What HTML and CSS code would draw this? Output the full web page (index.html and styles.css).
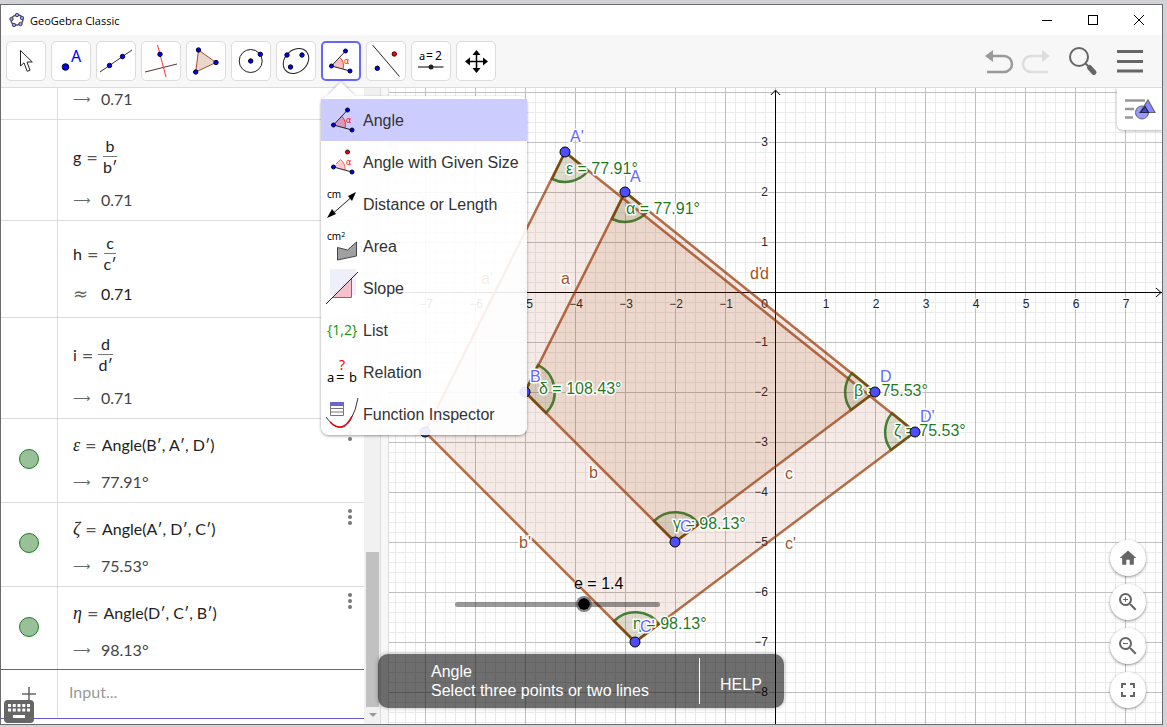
FILE: index.html
```
<!DOCTYPE html>
<html lang="en">
<head>
  <meta charset="UTF-8" />
  <meta name="viewport" content="width=device-width, initial-scale=1.0"/>
  <title>GeoGebra Classic</title>
  <link rel="stylesheet" href="styles.css">
</head>
<body>
  <svg class="defs" width="0" height="0" aria-hidden="true">
    <symbol id="icon-angle" viewBox="0 0 32 32">
      <path d="M6.500 21 L15 12.500 A12 12 0 0 1 18 24z" fill="#f00" fill-opacity=".25"/>
      <path d="M15 12.500 A12 12 0 0 1 18 24" fill="none" stroke="#e33"/>
      <path d="M20.500 6 L6.500 21 L25 26" fill="none" stroke="#222"/>
      <g fill="#00f" stroke="#002"><circle cx="20.500" cy="6" r="2"/><circle cx="6.500" cy="21" r="2"/><circle cx="25" cy="26" r="2"/></g>
      <text x="19" y="19" font-family="DejaVu Sans" font-size="8" fill="#f00">α</text>
    </symbol>
  </svg>

  <div class="window">
    <header class="titlebar">
      <svg width="16" height="16" viewBox="0 0 16 16">
        <ellipse cx="8" cy="8" rx="6" ry="5" fill="none" stroke="#555" stroke-width="1.500" transform="rotate(-15 8 8)"/>
        <g fill="#99f" stroke="#446"><circle cx="8" cy="3" r="1.700"/><circle cx="13" cy="6" r="1.700"/><circle cx="11.500" cy="12" r="1.700"/><circle cx="5" cy="13" r="1.700"/><circle cx="2.500" cy="7" r="1.700"/></g>
      </svg>
      <span class="title">GeoGebra Classic</span>
      <button class="win-btn" aria-label="Minimize"><svg width="10" height="10"><path d="M0 5.500H10" stroke="#000"/></svg></button>
      <button class="win-btn" aria-label="Maximize"><svg width="10" height="10"><rect x=".5" y=".5" width="9" height="9" fill="none" stroke="#000"/></svg></button>
      <button class="win-btn" aria-label="Close"><svg width="10" height="10"><path d="M0 0L10 10M10 0L0 10" stroke="#000"/></svg></button>
    </header>

    <nav class="toolbar">
      <div class="tools">
        <button class="tool" aria-label="Move"><svg viewBox="0 0 32 32"><path d="M10.500 5.500V21L14 17.800L17.200 26.300L20 25.200L17 17H22.300z" fill="#fff" stroke="#222"/></svg></button>
        <button class="tool" aria-label="Point"><svg viewBox="0 0 32 32"><circle cx="10.500" cy="22" r="3.300" fill="#00f" stroke="#002"/><text x="16" y="17" font-family="Noto Sans" font-size="16" fill="#00f">A</text></svg></button>
        <button class="tool" aria-label="Line"><svg viewBox="0 0 32 32"><path d="M0 27L32 5" stroke="#333"/><g fill="#00f" stroke="#002"><circle cx="9.500" cy="20.500" r="2.200"/><circle cx="22.500" cy="11.500" r="2.200"/></g></svg></button>
        <button class="tool" aria-label="Perpendicular line"><svg viewBox="0 0 32 32"><path d="M0 27L32 19" stroke="#533"/><path d="M12.500 0L21 32" stroke="#f33"/><circle cx="15" cy="9.300" r="2.200" fill="#00f" stroke="#002"/></svg></button>
        <button class="tool" aria-label="Polygon"><svg viewBox="0 0 32 32"><path d="M8.500 5L26 17.500L5.700 27z" fill="#ebd6cc" stroke="#a54f2a"/><g fill="#00f" stroke="#002"><circle cx="8.500" cy="5" r="2.200"/><circle cx="26" cy="17.500" r="2.200"/><circle cx="5.700" cy="27" r="2.200"/></g></svg></button>
        <button class="tool" aria-label="Circle"><svg viewBox="0 0 32 32"><circle cx="15.700" cy="16" r="11.500" fill="none" stroke="#222"/><g fill="#00f" stroke="#002"><circle cx="15.700" cy="16" r="2.200"/><circle cx="25.300" cy="9.300" r="2.200"/></g></svg></button>
        <button class="tool" aria-label="Ellipse"><svg viewBox="0 0 32 32"><ellipse cx="16" cy="16" rx="14" ry="11" transform="rotate(-42 16 16)" fill="none" stroke="#222"/><g fill="#00f" stroke="#002"><circle cx="7" cy="10" r="2.200"/><circle cx="22" cy="10" r="2.200"/><circle cx="10.500" cy="22" r="2.200"/></g></svg></button>
        <div class="tool-open">
          <button class="tool active" aria-label="Angle" aria-expanded="true"><svg><use href="#icon-angle"/></svg></button>
          <div class="menu" role="menu">
            <button class="menu-item selected" role="menuitem"><svg><use href="#icon-angle"/></svg>Angle</button>
            <button class="menu-item" role="menuitem">
              <svg viewBox="0 0 32 32"><path d="M6.500 21L13 13.500L15 14A12 12 0 0 1 18 24z" fill="#fcc"/><path d="M9 18L13.500 13.500A12 12 0 0 1 18 24" fill="none" stroke="#f66"/><path d="M6.500 21L25 26" stroke="#222"/><circle cx="20.500" cy="6" r="2" fill="#f00" stroke="#300"/><g fill="#00f" stroke="#002"><circle cx="6.500" cy="21" r="2"/><circle cx="25" cy="26" r="2"/></g><text x="19" y="19" font-family="DejaVu Sans" font-size="8" fill="#f00">α</text></svg>
              Angle with Given Size
            </button>
            <button class="menu-item" role="menuitem">
              <svg viewBox="0 0 32 32"><text x="0" y="10" font-family="Noto Sans" font-size="10">cm</text><path d="M3 28L27 7" stroke="#222"/><path d="M0 30L5 21L9 26zM29 4L21 8L25 13z"/></svg>
              Distance or Length
            </button>
            <button class="menu-item" role="menuitem">
              <svg viewBox="0 0 32 32"><text x="0" y="10" font-family="Noto Sans" font-size="10">cm<tspan font-size="7" dy="-3">2</tspan></text><path d="M10.500 17.500L20.500 20L29.500 12V26L10.500 30z" fill="#a0a0a0" stroke="#444"/></svg>
              Area
            </button>
            <button class="menu-item" role="menuitem">
              <svg viewBox="0 0 32 32"><path d="M3-3H29V23H3z" fill="#efeffc"/><path d="M6 25.500H24.500V7z" fill="#f5c0cc"/><path d="M6 25.500H24.500V7" fill="none" stroke="#f33"/><path d="M-1 32L31 0" stroke="#222"/></svg>
              Slope
            </button>
            <button class="menu-item" role="menuitem">
              <svg viewBox="0 0 32 32"><text x="0" y="21" font-family="Open Sans" font-size="14" font-weight="500" fill="#0a9a0a">{1,2}</text></svg>
              List
            </button>
            <button class="menu-item" role="menuitem">
              <svg viewBox="0 0 32 32"><text x="12" y="14" font-family="Noto Sans" font-size="14" fill="#f00">?</text><text x="0" y="26" font-family="Noto Sans" font-size="13">a</text><text x="9" y="26" font-family="Noto Sans" font-size="15">=</text><text x="22" y="26" font-family="Noto Sans" font-size="13">b</text></svg>
              Relation
            </button>
            <button class="menu-item" role="menuitem">
              <svg viewBox="0 0 32 32"><path d="M-1 19C8 31 17 34 24 21Q29 12 31 0" fill="none" stroke="#333"/><path d="M3 24C10 31 18 32 25 18" fill="none" stroke="#e00" stroke-width="1.300"/><path d="M3.500 4.500H16.500V17.500H3.500zM3.500 10.500H16.500M3.500 14H16.500" fill="#fff" stroke="#777"/><path d="M3 4H17V8H3z" fill="#66c"/></svg>
              Function Inspector
            </button>
          </div>
        </div>
        <button class="tool" aria-label="Reflect"><svg viewBox="0 0 32 32"><path d="M2.500 0L29.500 31.500" stroke="#222"/><circle cx="24.300" cy="9" r="2.200" fill="#f00" stroke="#300"/><circle cx="7.300" cy="23.300" r="2.200" fill="#00f" stroke="#002"/></svg></button>
        <button class="tool" aria-label="Slider"><svg viewBox="0 0 32 32"><text x="4" y="15" font-family="Noto Sans" font-size="11">a</text><text x="11" y="15" font-family="Noto Sans" font-size="12">=</text><text x="20" y="15" font-family="Noto Sans" font-size="12">2</text><path d="M3 22H28.500" stroke="#555" stroke-width="1.500"/><circle cx="16" cy="22" r="2.500" fill="#222"/></svg></button>
        <button class="tool" aria-label="Move view"><svg viewBox="0 0 32 32"><path d="M16.500 9V24M9 16.500H24" stroke="#000" stroke-width="1.500"/><path d="M16.500 5L20.500 10H12.500zM16.500 28L20.500 23H12.500zM5 16.500L10 12.500V20.500zM28 16.500L23 12.500V20.500z"/></svg></button>
      </div>
      <div class="actions">
        <div class="history">
          <button class="action" aria-label="Undo"><svg viewBox="0 0 32 32"><path d="M9 11H21A8 8 0 0 1 21 27H4" fill="none" stroke="#999" stroke-width="2.500"/><path d="M2 11L10 5V17z" fill="#999"/></svg></button>
          <button class="action" aria-label="Redo"><svg viewBox="0 0 32 32"><path d="M23 11H11A8 8 0 0 0 11 27H28" fill="none" stroke="#ddd" stroke-width="2.500"/><path d="M30 11L22 5V17z" fill="#ddd"/></svg></button>
        </div>
        <button class="action" aria-label="Search"><svg viewBox="0 0 32 32"><circle cx="12" cy="12" r="9" fill="none" stroke="#666" stroke-width="2"/><path d="M18.500 18.500L21 21" stroke="#666" stroke-width="2"/><path d="M22.500 22.500L27 27.500" stroke="#666" stroke-width="5" stroke-linecap="round"/></svg></button>
        <button class="action" aria-label="Menu"><svg viewBox="0 0 32 32"><path d="M3 6.500H29M3 16.500H29M3 26H29" stroke="#666" stroke-width="3"/></svg></button>
      </div>
    </nav>

    <main class="main">
      <section class="algebra">
        <div class="rows">
          <div class="row row-cut">
            <div class="marker"></div>
            <div class="formula"><div class="result"><span class="sign">⟶</span>0.71</div></div>
          </div>
          <div class="row">
            <div class="marker"></div>
            <div class="formula">
              <div class="equation">g<span class="equals">=</span><span class="fraction"><span>b</span><span>b′</span></span></div>
              <div class="result"><span class="sign">⟶</span>0.71</div>
            </div>
          </div>
          <div class="row row-low">
            <div class="marker"></div>
            <div class="formula">
              <div class="equation">h<span class="equals">=</span><span class="fraction"><span>c</span><span>c′</span></span></div>
              <div class="result approx"><span class="sign">≈</span>0.71</div>
            </div>
          </div>
          <div class="row">
            <div class="marker"></div>
            <div class="formula">
              <div class="equation">i<span class="equals">=</span><span class="fraction"><span>d</span><span>d′</span></span></div>
              <div class="result"><span class="sign">⟶</span>0.71</div>
            </div>
          </div>
          <div class="row row-angle">
            <div class="marker"><button class="visibility" aria-label="Show or hide ε"></button></div>
            <div class="formula">
              <div class="equation"><i>ε</i><span class="equals">=</span><span>Angle(B′, A′, D′)</span></div>
              <div class="result"><span class="sign">⟶</span>77.91°</div>
            </div>
            <button class="more" aria-label="More"><i></i><i></i><i></i></button>
          </div>
          <div class="row row-angle">
            <div class="marker"><button class="visibility" aria-label="Show or hide ζ"></button></div>
            <div class="formula">
              <div class="equation"><i>ζ</i><span class="equals">=</span><span>Angle(A′, D′, C′)</span></div>
              <div class="result"><span class="sign">⟶</span>75.53°</div>
            </div>
            <button class="more" aria-label="More"><i></i><i></i><i></i></button>
          </div>
          <div class="row row-angle row-last">
            <div class="marker"><button class="visibility" aria-label="Show or hide η"></button></div>
            <div class="formula">
              <div class="equation"><i>η</i><span class="equals">=</span><span>Angle(D′, C′, B′)</span></div>
              <div class="result"><span class="sign">⟶</span>98.13°</div>
            </div>
            <button class="more" aria-label="More"><i></i><i></i><i></i></button>
          </div>
          <div class="row input-row">
            <div class="marker"><svg width="14" height="14"><path d="M7 0V14M0 7H14" stroke="#666" stroke-width="1.500"/></svg></div>
            <input type="text" class="input" placeholder="Input..." aria-label="Input">
          </div>
        </div>
        <div class="scrollbar">
          <div class="thumb"></div>
          <svg width="16" height="17"><path d="M5 6H13L9 10z" fill="#999"/></svg>
        </div>
      </section>
      <div class="splitter"></div>

      <section class="graphics">
        <svg class="plot" width="100%" height="100%">
          <defs>
            <pattern id="minor" x="386" y="204" width="10" height="10" patternUnits="userSpaceOnUse"><path d="M0 0H10V1H1V10H0z" fill="#ebebeb"/></pattern>
            <pattern id="major" x="386" y="204" width="50" height="50" patternUnits="userSpaceOnUse"><path d="M0 0H50V1H1V50H0z" fill="#c0c0c0"/></pattern>
          </defs>
          <rect width="100%" height="100%" fill="url(#minor)"/>
          <rect width="100%" height="100%" fill="url(#major)"/>

          <!-- axes -->
          <rect x="0" y="204" width="100%" height="1"/>
          <rect x="386" y="3" width="1" height="100%"/>
          <path d="M382 7L386.500 2L391 7" fill="none" stroke="#000"/>
          <svg x="100%" y="204" overflow="visible"><path d="M-6-4L-1 .5L-6 5" fill="none" stroke="#000"/></svg>

          <!-- everything below is in pixels from the origin, 50 per unit -->
          <g transform="translate(386 204)">
            <g class="ticks" text-anchor="middle">
              <text x="-349" y="16">−7</text><text x="-299" y="16">−6</text><text x="-249" y="16">−5</text><text x="-199" y="16">−4</text>
              <text x="-149" y="16">−3</text><text x="-99" y="16">−2</text><text x="-49" y="16">−1</text>
              <text x="51" y="16">1</text><text x="101" y="16">2</text><text x="151" y="16">3</text><text x="201" y="16">4</text>
              <text x="251" y="16">5</text><text x="301" y="16">6</text><text x="351" y="16">7</text>
            </g>
            <g class="ticks" text-anchor="end">
              <text x="-7" y="16">0</text>
              <text x="-7" y="-146">3</text><text x="-7" y="-96">2</text><text x="-7" y="-46">1</text>
              <text x="-7" y="54">−1</text><text x="-7" y="104">−2</text><text x="-7" y="154">−3</text><text x="-7" y="204">−4</text>
              <text x="-7" y="254">−5</text><text x="-7" y="304">−6</text><text x="-7" y="354">−7</text><text x="-7" y="404">−8</text>
            </g>

            <g class="angle">
              <path d="M-150-100l-13 27A30 30 0 0 0 -127-81z"/>
              <path d="M-210-140l-13 27A30 30 0 0 0 -187-121z"/>
              <path d="M-250 100l13-27A30 30 0 0 1 -229 121z"/>
              <path d="M-100 250l-21-21A30 30 0 0 1 -76 232z"/>
              <path d="M-140 350l-21-21A30 30 0 0 1 -116 332z"/>
              <path d="M100 100l-23-19A30 30 0 0 0 76 118z"/>
              <path d="M140 140l-23-19A30 30 0 0 0 116 158z"/>
            </g>
            <g class="shape">
              <path d="M-150-100L-250 100L-100 250L100 100z"/>
              <path d="M-210-140L-350 140L-140 350L140 140z"/>
            </g>
            <g class="label segment-label">
              <text x="-214" y="-8">a</text><text x="-294" y="-8">a'</text>
              <text x="-186" y="186">b</text><text x="-256" y="256">b'</text>
              <text x="10" y="187">c</text><text x="10" y="257">c'</text>
              <text x="-25" y="-13">d'</text><text x="-15" y="-13">d</text>
            </g>
            <g class="label angle-label">
              <text x="-209" y="-118">ε = 77.91°</text><text x="-149" y="-78">α = 77.91°</text>
              <text x="-236" y="102">δ = 108.43°</text><text x="-102" y="237">γ = 98.13°</text>
              <text x="-142" y="337">η = 98.13°</text><text x="79" y="104">β = 75.53°</text>
              <text x="119" y="144">ζ = 75.53°</text>
            </g>
            <g class="point">
              <circle cx="-150" cy="-100" r="5"/><circle cx="-250" cy="100" r="5"/><circle cx="-100" cy="250" r="5"/><circle cx="100" cy="100" r="5"/>
              <circle cx="-210" cy="-140" r="5"/><circle cx="-350" cy="140" r="5"/><circle cx="-140" cy="350" r="5"/><circle cx="140" cy="140" r="5"/>
            </g>
            <g class="label point-label">
              <text x="-145" y="-110">A</text><text x="-245" y="90">B</text><text x="-95" y="240">C</text><text x="105" y="90">D</text>
              <text x="-205" y="-150">A'</text><text x="-345" y="130">B'</text><text x="-135" y="340">C'</text><text x="145" y="130">D'</text>
            </g>
          </g>
        </svg>

        <div class="slider">
          <label for="sliderE">e = 1.4</label>
          <input type="range" id="sliderE" min="-5" max="5" step="0.1" value="1.4">
        </div>

        <button class="style-btn" aria-label="Style bar">
          <svg width="32" height="32" viewBox="0 0 32 32"><path d="M1 7.500H21M1 16H10M1 24.500H9" stroke="#999" stroke-width="2.500"/><circle cx="18" cy="19.500" r="6.500" fill="#99f" stroke="#666"/><path d="M24 7L31 19.500H16z" fill="#88f" stroke="#666" stroke-width="1.200"/><path d="M21 13.500L24.500 19.500H16.500z" fill="#44d" stroke="#224" stroke-width="1.200"/></svg>
        </button>

        <div class="zoom-btns">
          <button class="home" aria-label="Home"><svg viewBox="0 0 24 24"><path d="M10 20v-6h4v6h5v-8h3L12 3 2 12h3v8z"/></svg></button>
          <button aria-label="Zoom in"><svg viewBox="0 0 24 24"><path d="M15.500 14h-.79l-.28-.27A6.471 6.471 0 0 0 16 9.500 6.500 6.500 0 1 0 9.500 16c1.610 0 3.090-.59 4.230-1.570l.27.28v.79l5 4.990L20.490 19l-4.990-5zm-6 0C7.010 14 5 11.990 5 9.500S7.010 5 9.500 5 14 7.010 14 9.500 11.990 14 9.500 14zM12 10h-2v2H9v-2H7V9h2V7h1v2h2z"/></svg></button>
          <button aria-label="Zoom out"><svg viewBox="0 0 24 24"><path d="M15.500 14h-.79l-.28-.27A6.471 6.471 0 0 0 16 9.500 6.500 6.500 0 1 0 9.500 16c1.610 0 3.090-.59 4.230-1.570l.27.28v.79l5 4.990L20.490 19l-4.990-5zm-6 0C7.010 14 5 11.990 5 9.500S7.010 5 9.500 5 14 7.010 14 9.500 11.990 14 9.500 14zM7 9h5v1H7z"/></svg></button>
          <button aria-label="Full screen"><svg viewBox="0 0 24 24"><path d="M7 14H5v5h5v-2H7v-3zm-2-4h2V7h3V5H5v5zm12 7h-3v2h5v-5h-2v3zM14 5v2h3v3h2V5h-5z"/></svg></button>
        </div>
      </section>

      <div class="message">
        <div class="message-text">
          <p>Angle</p>
          <p>Select three points or two lines</p>
        </div>
        <button class="help">HELP</button>
      </div>

      <button class="keyboard" aria-label="Keyboard">
        <svg width="22" height="15"><path d="M0 1.500H22M0 6H22" stroke="#fff" stroke-width="3" stroke-dasharray="3 1.750"/><path d="M5 12.500H17" stroke="#fff" stroke-width="3"/></svg>
      </button>
    </main>
  </div>
</body>
</html>
```

FILE: styles.css
```
:root {
  --border: #dcdcdc;
  --bar-bg: #f7f7f7;
  --icon: #666;
  --accent: #6557d2;
  --segment: #993300;
  --angle: #006400;
  --point: #4d4dff;
}

* {
  margin: 0;
  padding: 0;
  box-sizing: border-box;
}

body {
  height: 100vh;
  padding: 4px 4px 2px 0;
  background: #d2d3d6;
  font-family: "Liberation Sans", Arial, sans-serif;
  overflow: hidden;
}

button {
  background: none;
  border: none;
  font: inherit;
  color: inherit;
  cursor: pointer;
}

svg {
  display: block;
}

.defs {
  position: absolute;
}

.window {
  height: 100%;
  display: flex;
  flex-direction: column;
  background: #fff;
  border: 1px solid #6b6b6f;
}

/* title bar */
.titlebar {
  display: flex;
  align-items: center;
  height: 30px;
  padding-left: 8px;
}

.title {
  flex: 1;
  padding-left: 5px;
  font-family: "Open Sans", sans-serif;
  font-size: 11px;
}

.win-btn {
  display: flex;
  align-items: center;
  justify-content: center;
  width: 46px;
  height: 30px;
}

/* toolbar */
.toolbar {
  display: flex;
  justify-content: space-between;
  align-items: center;
  padding: 6px 16px 6px 5px;
  background: var(--bar-bg);
  border-bottom: 1px solid var(--border);
}

.tools {
  display: flex;
  gap: 5px;
}

.tool {
  display: flex;
  align-items: center;
  justify-content: center;
  width: 40px;
  height: 40px;
  background: #fff;
  border: 1px solid var(--border);
  border-radius: 5px;
}

.tool svg,
.action svg,
.menu-item svg {
  width: 32px;
  height: 32px;
  overflow: visible;
}

.tool.active {
  border: 2px solid #6666ff;
}

.tool-open {
  position: relative;
}

.actions {
  display: flex;
  gap: 15px;
}

.history {
  display: flex;
  gap: 5px;
}

/* tool menu */
.menu {
  position: absolute;
  z-index: 5;
  top: 55px;
  left: 0;
  padding-top: 3px;
  background: rgba(255, 255, 255, 0.9);
  border-radius: 8px;
  box-shadow: 0 1px 3px rgba(0, 0, 0, 0.4);
}

.menu::before {
  content: "";
  position: absolute;
  left: 6px;
  bottom: 100%;
  border: 14px solid transparent;
  border-top: none;
  border-bottom-color: #fff;
  filter: drop-shadow(0 -1px 1px rgba(0, 0, 0, 0.2));
}

.menu-item {
  display: flex;
  align-items: center;
  gap: 4px;
  width: 100%;
  height: 42px;
  padding: 2px 8px 0 6px;
  font-size: 16px;
  color: #333;
  white-space: nowrap;
}

.menu-item svg {
  margin-bottom: 2px;
}

.menu-item.selected {
  background: #ccccff;
}

/* algebra view */
.main {
  position: relative;
  flex: 1;
  min-height: 0;
  display: flex;
}

.algebra {
  flex: 0 0 379px;
  display: flex;
}

.rows {
  flex: 1;
  font-family: Lato, sans-serif;
  font-size: 16px;
  line-height: 20px;
  color: #222;
}

.row {
  display: flex;
  border-bottom: 1px solid var(--border);
}

.marker {
  display: flex;
  align-items: center;
  justify-content: center;
  width: 57px;
  padding-bottom: 3px;
  border-right: 1px solid var(--border);
}

.visibility {
  width: 20px;
  height: 20px;
  background: #99c199;
  border: 1px solid #1f7a1f;
  border-radius: 50%;
}

.formula {
  flex: 1;
  display: flex;
  flex-direction: column;
  gap: 13px;
  padding: 16px 0 10px 15px;
}

.row-cut .formula {
  padding-top: 1px;
}

.row-low .formula {
  gap: 10px;
  padding-top: 12px;
  padding-bottom: 13px;
}

.row-angle .formula {
  gap: 17px;
}

.row-last {
  border-bottom: none;
}

.row-last .formula {
  padding-bottom: 9px;
}

.equation {
  display: flex;
  align-items: center;
  gap: 5px;
}

.equation i {
  font-family: "Liberation Serif", serif;
  font-size: 18px;
}

.equals {
  font-size: 20px;
  color: #555;
}

.fraction {
  display: flex;
  flex-direction: column;
  text-align: center;
}

.fraction span:first-child {
  border-bottom: 1px solid #777;
}

.result {
  display: flex;
  color: #444;
}

.approx {
  color: #222;
}

.sign {
  width: 28px;
  font-family: "DejaVu Sans", sans-serif;
  font-size: 12px;
  color: var(--icon);
}

.approx .sign {
  font-size: 18px;
}

.more {
  display: flex;
  flex-direction: column;
  align-items: center;
  gap: 2px;
  width: 28px;
  padding-top: 6px;
}

.more i {
  width: 4px;
  height: 4px;
  background: #777;
  border-radius: 50%;
}

.input-row {
  height: 50px;
  border-top: 1px solid var(--accent);
  border-bottom: 1px solid var(--accent);
}

.input-row .marker {
  padding-bottom: 0;
}

.input {
  flex: 1;
  min-width: 0;
  padding: 0 11px 4px;
  border: none;
  outline: none;
  font: inherit;
}

.input::placeholder {
  color: #999;
}

.scrollbar {
  display: flex;
  flex-direction: column;
  justify-content: flex-end;
  width: 16px;
  background: #f1f1f1;
}

.thumb {
  height: 155px;
  margin: 0 1px 0 2px;
  background: #c1c1c1;
}

.splitter {
  width: 9px;
  background: var(--bar-bg);
  border: solid var(--border);
  border-width: 0 1px;
}

/* graphics view */
.graphics {
  position: relative;
  flex: 1;
  min-width: 0;
  overflow: hidden;
}

.plot text {
  paint-order: stroke;
  stroke: #fff;
  stroke-width: 3px;
  stroke-linejoin: round;
}

.ticks {
  font-size: 12px;
  fill: #222;
}

.plot .ticks text {
  stroke-opacity: 0.7;
}

.label {
  font-size: 16px;
  fill-opacity: 0.88;
}

.shape {
  fill: var(--segment);
  fill-opacity: 0.1;
  stroke: var(--segment);
  stroke-opacity: 0.7;
  stroke-width: 2.5px;
}

.angle {
  fill: var(--angle);
  fill-opacity: 0.1;
  stroke: var(--angle);
  stroke-opacity: 0.75;
  stroke-width: 2.5px;
}

.point {
  fill: var(--point);
  stroke: #000;
}

.segment-label {
  fill: var(--segment);
}

.angle-label {
  fill: var(--angle);
}

.point-label {
  fill: var(--point);
}

.slider {
  position: absolute;
  left: 66px;
  top: 486px;
  width: 205px;
}

.slider label {
  display: block;
  padding-left: 119px;
  font-size: 16px;
  line-height: 20px;
  text-shadow: 0 0 2px #fff, 0 0 2px #fff;
}

.slider input {
  display: block;
  appearance: none;
  width: 100%;
  height: 20px;
  background: none;
}

.slider input::-webkit-slider-runnable-track {
  height: 5px;
  background: rgba(0, 0, 0, 0.4);
  border-radius: 3px;
}

.slider input::-webkit-slider-thumb {
  appearance: none;
  width: 16px;
  height: 16px;
  margin-top: -6px;
  background: #000;
  background-clip: padding-box;
  border: 2px solid rgba(80, 80, 80, 0.7);
  border-radius: 50%;
}

.style-btn {
  position: absolute;
  top: 0;
  right: 0;
  padding: 5px 6px 5px 7px;
  background: #fff;
  border-radius: 0 0 0 6px;
  box-shadow: 0 1px 3px rgba(0, 0, 0, 0.3);
}

.zoom-btns {
  position: absolute;
  right: 16px;
  bottom: 16px;
  display: flex;
  flex-direction: column;
  gap: 8px;
}

.zoom-btns button {
  display: flex;
  align-items: center;
  justify-content: center;
  width: 36px;
  height: 36px;
  background: #fff;
  border-radius: 50%;
  box-shadow: 0 1px 3px rgba(0, 0, 0, 0.45);
}

.zoom-btns svg {
  width: 24px;
  height: 24px;
  fill: var(--icon);
}

.zoom-btns .home svg {
  width: 20px;
  height: 20px;
}

/* tooltip bar */
.message {
  position: absolute;
  left: 377px;
  bottom: 16px;
  display: flex;
  align-items: center;
  padding: 4px 0 4px 53px;
  background: rgba(0, 0, 0, 0.57);
  border-radius: 10px;
  box-shadow: 0 0 4px rgba(0, 0, 0, 0.3);
  color: #fff;
  font-size: 16px;
  line-height: 19px;
}

.message-text {
  width: 268px;
}

.help {
  height: 46px;
  padding: 6px 22px 0 20px;
  border-left: 1px solid #fff;
}

.keyboard {
  position: absolute;
  left: 3px;
  bottom: 1px;
  padding: 4px;
  background: var(--icon);
  border-radius: 4px;
}
```
